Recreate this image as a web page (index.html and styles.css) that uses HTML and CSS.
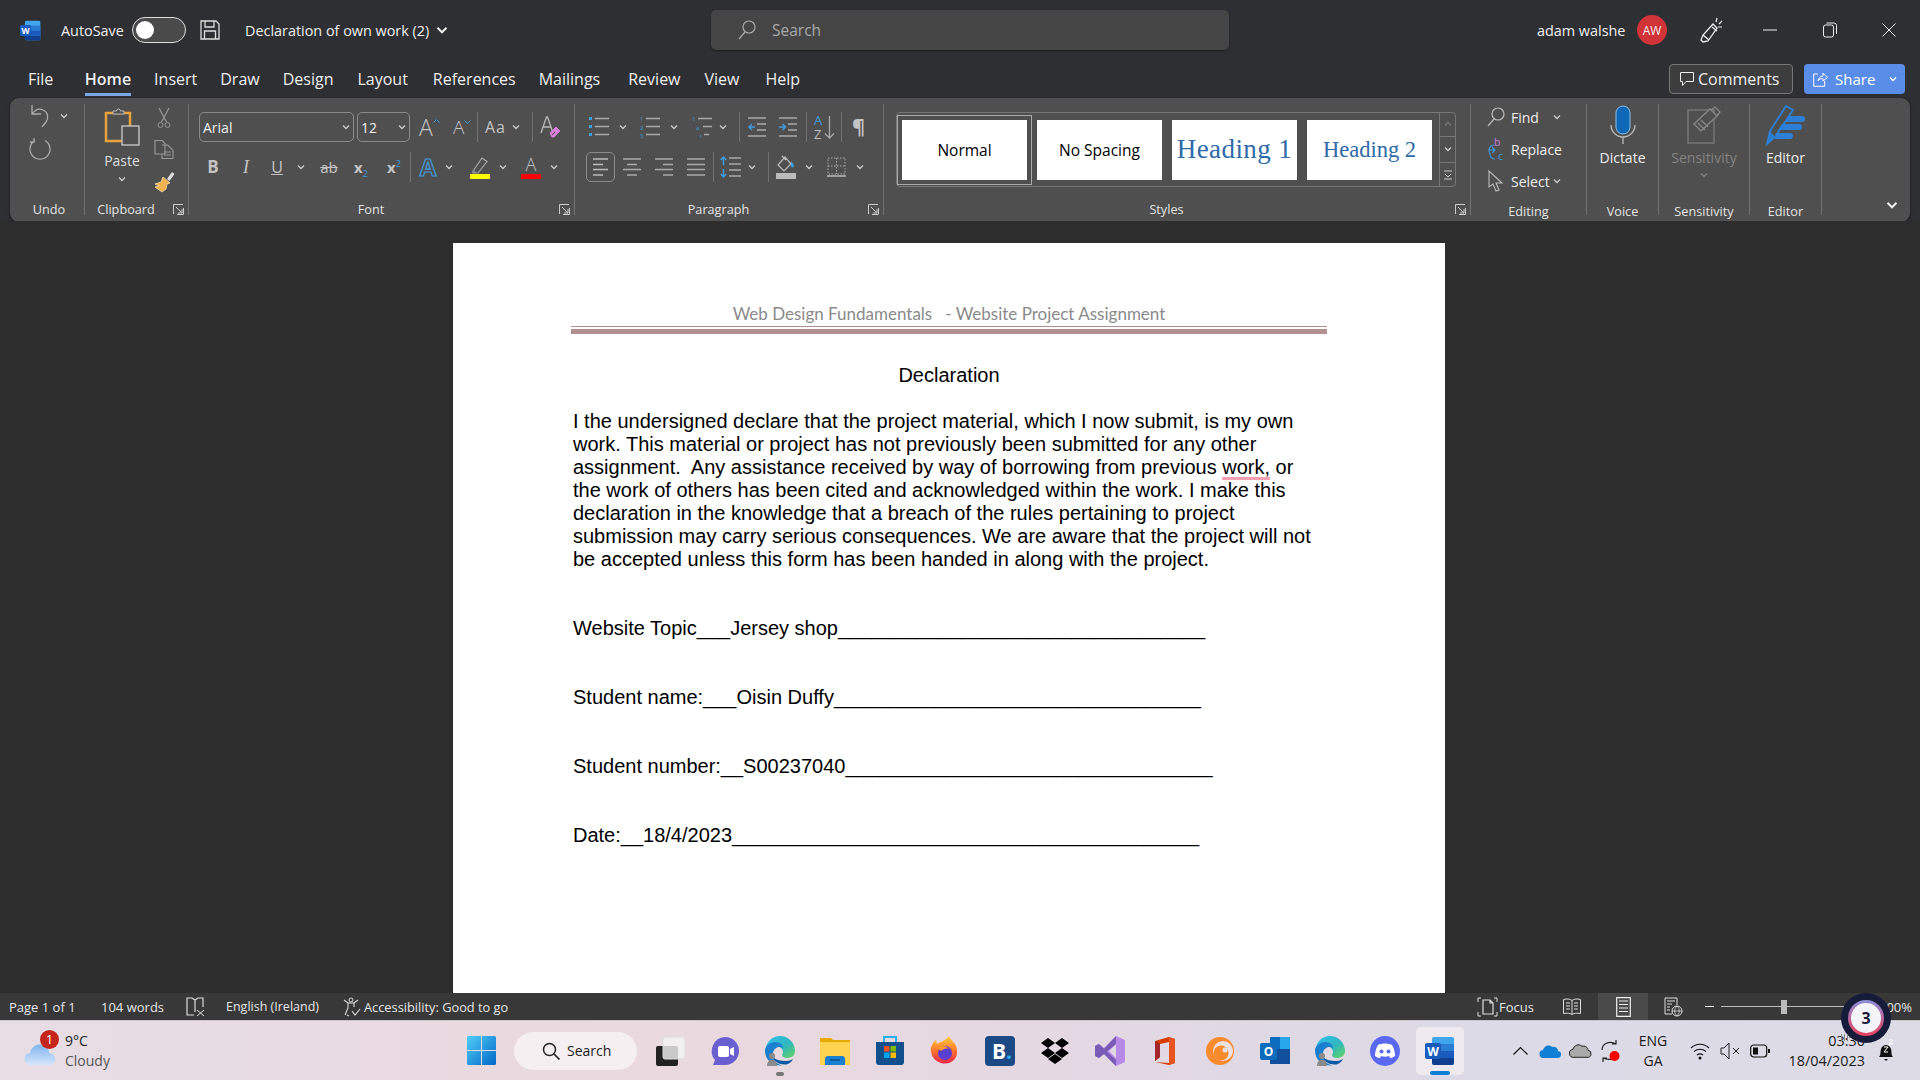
FILE: index.html
```html
<!DOCTYPE html>
<html lang="en">
<head>
<meta charset="UTF-8">
<title>Declaration of own work (2) - Word</title>
<link rel="stylesheet" href="styles.css">
</head>
<body>
<svg class="defs" width="0" height="0">
  <defs>
    <symbol id="chev" viewBox="0 0 8 8"><path d="M1 2.5 4 5.5 7 2.5" fill="none" stroke="currentColor" stroke-width="1.3"/></symbol>
    <symbol id="launch" viewBox="0 0 11 11"><path d="M.5 10V.5H10M3 3l6 6M9 5v4H5M10.5 4v6.5H4" fill="none" stroke="#ccc" stroke-width="1"/></symbol>
    <symbol id="wordlogo" viewBox="0 0 30 30">
      <rect x="7" y="1" width="22" height="28" rx="2" fill="#41a5ee"/>
      <rect x="7" y="8" width="22" height="7" fill="#2b7cd3"/>
      <rect x="7" y="15" width="22" height="7" fill="#185abd"/>
      <path d="M7 22h22v5a2 2 0 0 1-2 2H9a2 2 0 0 1-2-2z" fill="#103f91"/>
      <rect x="0" y="7" width="16" height="16" rx="2" fill="#1a5cbe"/>
      <text x="8" y="19.5" text-anchor="middle" class="logo-w">W</text>
    </symbol>
    <symbol id="edge" viewBox="0 0 30 30">
      <defs>
        <linearGradient id="edgeg" x1="0" y1="0" x2="1" y2="1"><stop offset="0" stop-color="#35c1f1"/><stop offset=".55" stop-color="#2fb6c0"/><stop offset="1" stop-color="#66d75f"/></linearGradient>
      </defs>
      <path d="M15 0a15 15 0 0 1 15 15c0 5-4 7-8 7-3 0-5-1-5-3 0-1 1-1.500 1-3 0-3-3-6-8-6-6 0-10 4-10 8C0 6 7 0 15 0z" fill="url(#edgeg)"/>
      <path d="M0 15c0-5 5-9 10-9 5 0 8 3 8 6-3-2-9-1-10 5-1 6 3 11 9 12.500C8 30 0 24 0 15z" fill="#1b7fd0"/>
      <path d="M8 21c1 5 8 9 15 7 2-1 4-3 5-5-2 1-4 2-7 2-5 0-10-1-13-4z" fill="#0c59a4"/>
      <circle cx="7" cy="20" r="3" fill="#8a8a8a"/><path d="M2 30c0-4 2-6 5-6s5 2 5 6z" fill="#8a8a8a"/>
    </symbol>
  </defs>
</svg>

<header class="titlebar">
  <svg class="word-icon"><use href="#wordlogo"/></svg>
  <span class="autosave">AutoSave</span>
  <span class="toggle"><span class="knob"></span></span>
  <svg class="save" width="20" height="20" viewBox="0 0 20 20"><path d="M1 1h15l3 3v15H1zM5 1v6h9V1M4.500 19v-8h11v8" fill="none" stroke="#ddd" stroke-width="1.300"/></svg>
  <span class="doc-name">Declaration of own work (2)</span>
  <svg class="title-chev"><use href="#chev"/></svg>
  <div class="searchbox">
    <svg width="18" height="20" viewBox="0 0 18 20"><circle cx="11" cy="7" r="6" fill="none" stroke="#aaa" stroke-width="1.200"/><path d="M7 12 1 19" stroke="#aaa" stroke-width="1.200"/></svg>
    <span>Search</span>
  </div>
  <div class="account">
    <span class="user">adam walshe</span>
    <span class="avatar">AW</span>
    <svg class="pen" width="22" height="26" viewBox="0 0 22 26"><path d="M13 7 3 18l-2 5 2 2 5-1 9-13zM3 18l6 5M12 10l5 4" fill="none" stroke="#eee" stroke-width="1.300"/><path d="M16 5l1-4M19 7l3-3M18 10l4 0" fill="none" stroke="#eee" stroke-width="1.200"/></svg>
    <svg class="win-btn" width="14" height="2" viewBox="0 0 14 2"><path d="M0 1h14" stroke="#eee"/></svg>
    <svg class="win-btn restore" width="14" height="16" viewBox="0 0 14 16"><rect x=".5" y="3" width="10" height="12" rx="2" fill="none" stroke="#eee"/><path d="M3.500 1H11a2.500 2.500 0 0 1 2.500 2.500V12" fill="none" stroke="#eee"/></svg>
    <svg class="win-btn close" width="14" height="14" viewBox="0 0 14 14"><path d="M.5.500l13 13M13.500.500l-13 13" stroke="#eee"/></svg>
  </div>
</header>

<nav class="tabs">
  <span class="tab">File</span>
  <span class="tab active">Home</span>
  <span class="tab">Insert</span>
  <span class="tab">Draw</span>
  <span class="tab">Design</span>
  <span class="tab">Layout</span>
  <span class="tab">References</span>
  <span class="tab">Mailings</span>
  <span class="tab">Review</span>
  <span class="tab">View</span>
  <span class="tab">Help</span>
  <span class="btn-comments">
    <svg width="14" height="15" viewBox="0 0 14 15"><path d="M.5.500h13v9H6l-3.500 4v-4h-2z" fill="none" stroke="#eee"/></svg>
    Comments
  </span>
  <span class="btn-share">
    <svg width="15" height="15" viewBox="0 0 15 15"><path d="M5 2H.7v12.300h11V9M5 9c0-3 3-5 5-5V1l4.500 4.500L10 9V6.500C8 6.500 6 7 5 9z" fill="none" stroke="#fff"/></svg>
    Share
    <svg class="share-chev"><use href="#chev"/></svg>
  </span>
</nav>

<section class="ribbon">
  <div class="group g-undo">
    <div class="g-body">
      <div class="row undo-row">
        <svg class="ml21" width="20" height="24" viewBox="0 0 20 24"><path d="M1 1v9h9M1 10c3-4 7-6 11-4 5 2 6 8 3 12l-4 5" fill="none" stroke="#aaa" stroke-width="1.300"/></svg>
        <svg class="chev ml9"><use href="#chev"/></svg>
      </div>
      <div class="row undo-row redo-row">
        <svg class="ml19" width="22" height="24" viewBox="0 0 22 24"><path d="M6 3.500A10 10 0 1 0 16 3.500M5 1v4H1" fill="none" stroke="#aaa" stroke-width="1.300"/></svg>
      </div>
    </div>
    <div class="g-label">Undo</div>
  </div>

  <div class="group g-clip">
    <div class="g-body clip-body">
      <div class="paste">
        <svg width="35" height="38" viewBox="0 0 35 38">
          <path d="M1 5h24v28H1z" fill="none" stroke="#e8a33d" stroke-width="2.500"/>
          <path d="M8 6V3h3.500a2 2 0 0 1 4 0H19v3z" fill="#4f4f4f" stroke="#bbb"/>
          <rect x="17" y="18" width="17" height="19" fill="#4f4f4f" stroke="#ccc" stroke-width="1.300"/>
        </svg>
        <span class="paste-text">Paste</span>
        <svg class="chev"><use href="#chev"/></svg>
      </div>
      <div class="clip-tools">
        <svg width="14" height="20" viewBox="0 0 14 20"><path d="M2 0 9.500 14M12 0 4.500 14" fill="none" stroke="#999" stroke-width="1.200"/><circle cx="3.500" cy="17" r="2.500" fill="none" stroke="#999"/><circle cx="10.500" cy="17" r="2.500" fill="none" stroke="#999"/></svg>
        <svg width="20" height="19" viewBox="0 0 20 19"><path d="M1 .5h7l3 3V14H1zM8 5h5l.5 0 5.500 5v8.500H8V14" fill="none" stroke="#999" stroke-width="1.100"/><path d="M10 12h7M10 15h7" stroke="#999"/></svg>
        <svg width="21" height="21" viewBox="0 0 21 21"><path d="M13 8l5-7 2.500 2-5 7z" fill="#ddd"/><path d="M9 6l7 6-3 1-1 5-4 3-7-5 4-1-4-2 6-2z" fill="#f0b24a" stroke="#f6dca8" stroke-width=".8"/></svg>
      </div>
    </div>
    <div class="g-label has-launch">Clipboard<svg class="launch"><use href="#launch"/></svg></div>
  </div>

  <div class="group g-font">
    <div class="g-body">
      <div class="row">
        <span class="combo combo-font">Arial<svg class="chev"><use href="#chev"/></svg></span>
        <span class="combo combo-size ml3">12<svg class="chev"><use href="#chev"/></svg></span>
        <span class="glyph big w20 ml9">A<svg class="caret" width="7" height="4" viewBox="0 0 7 4"><path d="M.5 3.500 3.500.5l3 3" fill="none" stroke="#3f9bdc"/></svg></span>
        <span class="glyph mid w17 ml14">A<svg class="caret" width="7" height="4" viewBox="0 0 7 4"><path d="M.5.500l3 3 3-3" fill="none" stroke="#3f9bdc"/></svg></span>
        <span class="vsep ml7"></span>
        <span class="glyph aa w21 ml7">Aa</span>
        <svg class="chev ml6"><use href="#chev"/></svg>
        <span class="vsep ml12"></span>
        <svg class="ml7" width="20" height="24" viewBox="0 0 20 24"><path d="M1 18 6.500 2h1L13 18M3 12h8" fill="none" stroke="#bbb" stroke-width="1.300"/><path d="M10 18l6-6 4 4-6 6h-2z" fill="#d47fd6" stroke="#d47fd6"/><path d="M12 20l3-3" stroke="#4f4f4f"/></svg>
      </div>
      <div class="row">
        <span class="glyph bold w16 ml6">B</span>
        <span class="glyph ital w16 ml17">I</span>
        <span class="glyph under w16 ml15">U</span>
        <svg class="chev ml12"><use href="#chev"/></svg>
        <span class="glyph strike w18 ml15">ab</span>
        <span class="glyph script w18 ml14">x<sub>2</sub></span>
        <span class="glyph script w18 ml15">x<sup>2</sup></span>
        <span class="vsep ml7"></span>
        <span class="glyph effect w20 ml7">A</span>
        <svg class="chev ml7"><use href="#chev"/></svg>
        <svg class="ml17" width="20" height="24" viewBox="0 0 20 24"><path d="M3 16l9-13 5 3.500L8 18H3z" fill="none" stroke="#aaa" stroke-width="1.200"/><path d="M3 14v4h4" fill="#888"/><rect y="19" width="20" height="5" fill="#ffff00"/></svg>
        <svg class="chev ml9"><use href="#chev"/></svg>
        <span class="glyph colour w20 ml14">A</span>
        <svg class="chev ml9"><use href="#chev"/></svg>
      </div>
    </div>
    <div class="g-label has-launch">Font<svg class="launch"><use href="#launch"/></svg></div>
  </div>

  <div class="group g-para">
    <div class="g-body">
      <div class="row">
        <svg class="ml3" width="20" height="22" viewBox="0 0 20 22"><path d="M0 1h3v3H0zM0 9h3v3H0zM0 17h3v3H0z" fill="#3f9bdc"/><path d="M6 2.500h14M6 10.500h14M6 18.500h14" stroke="#aaa" stroke-width="1.500"/></svg>
        <svg class="chev ml10"><use href="#chev"/></svg>
        <svg class="ml13" width="20" height="22" viewBox="0 0 20 22"><text x="0" y="5" class="mini">1</text><text x="0" y="13.500" class="mini">2</text><text x="0" y="22" class="mini">3</text><path d="M6 2.500h14M6 10.500h14M6 18.500h14" stroke="#aaa" stroke-width="1.500"/></svg>
        <svg class="chev ml10"><use href="#chev"/></svg>
        <svg class="ml14" width="20" height="22" viewBox="0 0 20 22"><text x="0" y="5" class="mini">1</text><text x="4" y="13.500" class="mini">a</text><text x="8" y="22" class="mini">i</text><path d="M6 2.500h14M11 10.500h9M12 18.500h5" stroke="#aaa" stroke-width="1.500"/></svg>
        <svg class="chev ml7"><use href="#chev"/></svg>
        <span class="vsep ml12"></span>
        <svg class="ml8" width="18" height="22" viewBox="0 0 18 22"><path d="M0 2h18M9 8h9M9 14h9M0 20h18" stroke="#aaa" stroke-width="1.500"/><path d="M7 11H1M4 8l-3 3 3 3" fill="none" stroke="#3f9bdc" stroke-width="1.500"/></svg>
        <svg class="ml13" width="18" height="22" viewBox="0 0 18 22"><path d="M0 2h18M9 8h9M9 14h9M0 20h18" stroke="#aaa" stroke-width="1.500"/><path d="M0 11h6M3.500 8l3 3-3 3" fill="none" stroke="#3f9bdc" stroke-width="1.500"/></svg>
        <span class="vsep ml9"></span>
        <svg class="ml7" width="21" height="26" viewBox="0 0 21 26"><text x="0" y="11" class="az az-a">A</text><text x="0" y="25" class="az">Z</text><path d="M15.500 2v22M11 19.500l4.500 4.500 4.500-4.500" fill="none" stroke="#aaa" stroke-width="1.300"/></svg>
        <span class="vsep ml6"></span>
        <span class="glyph pil w15 ml9">¶</span>
      </div>
      <div class="row">
        <span class="align-on"><svg width="19" height="20" viewBox="0 0 19 20"><path d="M2 2h15M2 7.500h10M2 12.500h15M2 18h10" stroke="#bbb" stroke-width="1.500"/></svg></span>
        <svg class="ml8" width="18" height="20" viewBox="0 0 18 20"><path d="M0 2h18M4 7.500h10M0 12.500h18M4 18h10" stroke="#aaa" stroke-width="1.500"/></svg>
        <svg class="ml14" width="18" height="20" viewBox="0 0 18 20"><path d="M0 2h18M8 7.500h10M0 12.500h18M8 18h10" stroke="#aaa" stroke-width="1.500"/></svg>
        <svg class="ml14" width="18" height="20" viewBox="0 0 18 20"><path d="M0 2h18M0 7.500h18M0 12.500h18M0 18h18" stroke="#aaa" stroke-width="1.500"/></svg>
        <span class="vsep ml8"></span>
        <svg class="ml6" width="21" height="22" viewBox="0 0 21 22"><path d="M9 2h12M9 8h12M9 14h12M9 20h12" stroke="#aaa" stroke-width="1.500"/><path d="M3.500 9V1M3.500 13v8M.7 4 3.500 1l2.800 3M.7 18l2.800 3 2.800-3" fill="none" stroke="#3f9bdc" stroke-width="1.500"/></svg>
        <svg class="chev ml7"><use href="#chev"/></svg>
        <span class="vsep ml12"></span>
        <svg class="ml7" width="20" height="24" viewBox="0 0 20 24"><path d="M9 2 2 10l6 6 7-7zM6 1l4 4" fill="none" stroke="#bbb" stroke-width="1.200"/><path d="M15 6c2 2 3 4 3 5a1.500 1.500 0 0 1-3 0z" fill="#3f9bdc"/><rect y="18" width="20" height="6" fill="#bbb"/></svg>
        <svg class="chev ml9"><use href="#chev"/></svg>
        <svg class="ml14" width="19" height="20" viewBox="0 0 19 20"><path d="M1 1h17v16H1zM9.500 1v16M1 9h17" fill="none" stroke="#aaa" stroke-dasharray="1.500 1.500"/><path d="M0 19h19" stroke="#bbb" stroke-width="1.500"/></svg>
        <svg class="chev ml10"><use href="#chev"/></svg>
      </div>
    </div>
    <div class="g-label has-launch">Paragraph<svg class="launch"><use href="#launch"/></svg></div>
  </div>

  <div class="group g-styles">
    <div class="g-body">
      <div class="gallery">
        <span class="tile tile-on">Normal</span>
        <span class="tile">No Spacing</span>
        <span class="tile h1">Heading 1</span>
        <span class="tile h2">Heading 2</span>
        <div class="gal-scroll">
          <span class="dim"><svg class="chev flip"><use href="#chev"/></svg></span>
          <span><svg class="chev"><use href="#chev"/></svg></span>
          <span><svg width="10" height="10" viewBox="0 0 10 10"><path d="M1 1h8M2 4l3 3 3-3M1 9h8" fill="none" stroke="#ccc"/></svg></span>
        </div>
      </div>
    </div>
    <div class="g-label has-launch">Styles<svg class="launch"><use href="#launch"/></svg></div>
  </div>

  <div class="group g-edit">
    <div class="g-body edit-body">
      <div class="edit-row">
        <svg width="18" height="20" viewBox="0 0 18 20"><circle cx="11" cy="7" r="6" fill="none" stroke="#bbb" stroke-width="1.200"/><path d="M7 12 1 19" stroke="#bbb" stroke-width="1.200"/></svg>
        <span>Find</span><svg class="chev find-chev"><use href="#chev"/></svg>
      </div>
      <div class="edit-row">
        <svg width="18" height="22" viewBox="0 0 18 22"><text x="7" y="8" class="rep rep-b">b</text><text x="11" y="22" class="rep">c</text><path d="M7 7C2 7 1 13 3 16M1 12h7M5 9l3 3-3 3M8 21c-3 0-5-2-5-5" fill="none" stroke="#3f9bdc" stroke-width="1.100"/></svg>
        <span>Replace</span>
      </div>
      <div class="edit-row">
        <svg width="18" height="22" viewBox="0 0 18 22"><path d="M2 1v16l4-3 3 7 3-1-3-7h6z" fill="none" stroke="#bbb" stroke-width="1.100"/></svg>
        <span>Select</span><svg class="chev select-chev"><use href="#chev"/></svg>
      </div>
    </div>
    <div class="g-label low">Editing</div>
  </div>

  <div class="group g-voice">
    <div class="g-body big-body">
      <svg width="26" height="38" viewBox="0 0 26 38"><rect x="6" y="0" width="14" height="28" rx="7" fill="#0f67b8" stroke="#8dc1ea"/><path d="M1 19a12 12 0 0 0 24 0M13 31v7" fill="none" stroke="#bbb" stroke-width="1.300"/></svg>
      <span>Dictate</span>
    </div>
    <div class="g-label low">Voice</div>
  </div>

  <div class="group g-sens">
    <div class="g-body big-body muted">
      <svg width="34" height="38" viewBox="0 0 34 38"><path d="M1 4h26v33H1z" fill="none" stroke="#777" stroke-width="1.500"/><path d="M7 18 23 3l7 7-16 15z" fill="#4f4f4f" stroke="#888" stroke-width="1.300"/><path d="M24 4l4-3 5 5-3 4M11 17l7 7M14 14l7 7" fill="none" stroke="#888" stroke-width="1.300"/></svg>
      <span>Sensitivity</span>
      <svg class="chev"><use href="#chev"/></svg>
    </div>
    <div class="g-label low">Sensitivity</div>
  </div>

  <div class="group g-editor">
    <div class="g-body big-body">
      <svg width="38" height="38" viewBox="0 0 38 38"><path d="M0 38 3 25 19 0l7 4L8 31z" fill="none" stroke="#2c7fd6" stroke-width="1.800"/><path d="M0 38l8-7-5-6zM22 10h13a3 3 0 0 1 0 6H18zM15 18h17a3 3 0 0 1 0 6H11zM9 27h14a3 3 0 0 1 0 6H8z" fill="#2c7fd6"/></svg>
      <span>Editor</span>
    </div>
    <div class="g-label low">Editor</div>
  </div>

  <div class="ribbon-end"><svg class="collapse"><use href="#chev"/></svg></div>
</section>

<main class="workspace">
  <article class="page">
    <div class="doc-head">Web Design Fundamentals   - Website Project Assignment</div>
    <div class="doc-rule"></div>
    <h1 class="doc-title">Declaration</h1>
    <p class="doc-text">I the undersigned declare that the project material, which I now submit, is my own<br>
    work. This material or project has not previously been submitted for any other<br>
    assignment.&nbsp; Any assistance received by way of borrowing from previous <span class="spell">work,</span> or<br>
    the work of others has been cited and acknowledged within the work. I make this<br>
    declaration in the knowledge that a breach of the rules pertaining to project<br>
    submission may carry serious consequences. We are aware that the project will not<br>
    be accepted unless this form has been handed in along with the project.</p>
    <p class="doc-field">Website Topic___Jersey shop_________________________________</p>
    <p class="doc-field">Student name:___Oisin Duffy_________________________________</p>
    <p class="doc-field">Student number:__S00237040_________________________________</p>
    <p class="doc-field">Date:__18/4/2023__________________________________________</p>
  </article>
</main>

<footer class="status">
  <span class="st-page">Page 1 of 1</span>
  <span class="st-words">104 words</span>
  <svg class="st-proof" width="19" height="20" viewBox="0 0 19 20"><path d="M8 18H1V1h5l3 2 3-2h5v9M9 3v12" fill="none" stroke="#ddd" stroke-width="1.200"/><path d="M11 13l7 6M18 13l-7 6" stroke="#ddd"/></svg>
  <span class="st-lang">English (Ireland)</span>
  <svg class="st-acc" width="18" height="20" viewBox="0 0 18 20"><circle cx="8" cy="3" r="2" fill="none" stroke="#ddd"/><path d="M1 3l4 3h6l4-3M5 6v5l-3 7M11 6v4M4 18l2 1M9 14l3 4 5-6" fill="none" stroke="#ddd" stroke-width="1.100"/></svg>
  <span class="st-a11y">Accessibility: Good to go</span>
  <div class="st-right">
    <svg width="19" height="20" viewBox="0 0 19 20"><path d="M5 3h7l3 3v11H5zM12 3v3h3" fill="none" stroke="#ddd" stroke-width="1.200"/><path d="M0 5V1h3M19 5V1h-3M0 15v4h3M19 15v4h-3" fill="none" stroke="#ddd"/></svg>
    <span class="st-focus">Focus</span>
    <svg class="st-read" width="18" height="18" viewBox="0 0 18 18"><path d="M.5 1.500C4 .5 7 1 9 2.500 11 1 14 .5 17.500 1.500v14C14 15 11 15 9 16.500 7 15 4 15 .5 15.500zM9 2.500v14M3 5h4M3 8h4M3 11h4M11 5h4M11 8h4M11 11h4" fill="none" stroke="#ddd"/></svg>
    <span class="st-layout"><svg width="15" height="20" viewBox="0 0 15 20"><path d="M.7.700h13.600v18.600H.7zM3 4h9M3 7.500h9M3 11h9M3 14.500h9" fill="none" stroke="#eee" stroke-width="1.200"/></svg></span>
    <svg class="st-web" width="18" height="20" viewBox="0 0 18 20"><path d="M8 17H1V1h12v7M3 4h8M3 7h5M3 10h3M3 13h3" fill="none" stroke="#ddd"/><circle cx="13" cy="14" r="5" fill="none" stroke="#ddd"/><path d="M8 14h10M13 9c-3 3-3 7 0 10M13 9c3 3 3 7 0 10" fill="none" stroke="#ddd" stroke-width=".8"/></svg>
    <span class="zoom-minus"></span>
    <span class="zoom-track"><span class="zoom-thumb"></span></span>
    <span class="st-zoom">100%</span>
  </div>
</footer>

<div class="taskbar">
  <div class="weather">
    <svg class="cloud" width="30" height="22" viewBox="0 0 30 22"><defs><linearGradient id="cl" x1="0" y1="0" x2="0" y2="1"><stop offset="0" stop-color="#7fb4f0"/><stop offset="1" stop-color="#d5e6fb"/></linearGradient></defs><path d="M6 22a6 6 0 0 1-1-12c1-6 7-10 13-8 4 1 6 4 6 8a6 6 0 0 1 0 12z" fill="url(#cl)"/></svg>
    <span class="badge-one">1</span>
    <div class="weather-text"><span>9°C</span><span class="w-sub">Cloudy</span></div>
  </div>
  <svg class="win-logo" width="29" height="29" viewBox="0 0 29 29"><defs><linearGradient id="win" x1="0" y1="0" x2="1" y2="1"><stop offset="0" stop-color="#4fcdf8"/><stop offset="1" stop-color="#0369c8"/></linearGradient></defs><path d="M0 1.500A1.500 1.500 0 0 1 1.500 0H14v14H0zM15 0h12.500A1.500 1.500 0 0 1 29 1.500V14H15zM0 15h14v14H1.500A1.500 1.500 0 0 1 0 27.500zM15 15h14v12.500a1.500 1.500 0 0 1-1.500 1.500H15z" fill="url(#win)"/></svg>
  <div class="task-search">
    <svg width="18" height="18" viewBox="0 0 18 18"><circle cx="7.500" cy="7.500" r="6" fill="none" stroke="#222" stroke-width="1.500"/><path d="M12 12l5.500 5.500" stroke="#222" stroke-width="1.700"/></svg>
    <span>Search</span>
  </div>
  <div class="apps">
    <span class="app"><svg width="30" height="30" viewBox="0 0 30 30"><rect x="1" y="10" width="22" height="20" rx="2" fill="#222"/><rect x="8" y="1" width="22" height="22" rx="2" fill="#f4f4f4" fill-opacity=".8" stroke="#ddd"/></svg></span>
    <span class="app"><svg width="30" height="30" viewBox="0 0 30 30"><path d="M15 1a14 14 0 0 1 0 28H3l2-5A14 14 0 0 1 15 1z" fill="#6a5fd0"/><rect x="8" y="10" width="11" height="11" rx="2" fill="#fff"/><path d="M20 13l4-2v9l-4-2z" fill="#fff"/></svg></span>
    <span class="app app-run"><svg width="30" height="30"><use href="#edge"/></svg></span>
    <span class="app"><svg width="30" height="30" viewBox="0 0 30 30"><path d="M0 2h11l2 2h17v25H0z" fill="#e8a900"/><rect y="6" width="30" height="23" fill="#ffd34f"/><path d="M5 29v-6a3 3 0 0 1 3-3h14a3 3 0 0 1 3 3v6z" fill="#1a7fd0"/><path d="M10 24h10" stroke="#0b4f8c" stroke-width="1.500"/></svg></span>
    <span class="app"><svg width="30" height="30" viewBox="0 0 30 30"><path d="M9 6V1h12v5" fill="none" stroke="#2bb0ef" stroke-width="2"/><path d="M1 6h28v20a3 3 0 0 1-3 3H4a3 3 0 0 1-3-3z" fill="#11508c"/><rect x="9" y="10" width="5.500" height="5.500" fill="#f25022"/><rect x="15.500" y="10" width="5.500" height="5.500" fill="#7fba00"/><rect x="9" y="16.500" width="5.500" height="5.500" fill="#00a4ef"/><rect x="15.500" y="16.500" width="5.500" height="5.500" fill="#ffb900"/></svg></span>
    <span class="app"><svg width="30" height="30" viewBox="0 0 30 30"><defs><linearGradient id="ff" x1="0" y1="0" x2="0" y2="1"><stop offset="0" stop-color="#ffd33d"/><stop offset=".5" stop-color="#ff7a2b"/><stop offset="1" stop-color="#e8274b"/></linearGradient></defs><path d="M19 0c1 3 4 5 6 8 3 5 3 12-1 16a14 14 0 0 1-23-8C0 11 3 6 6 4l1 4c3-2 8-3 12-8z" fill="url(#ff)"/><circle cx="15" cy="17" r="7" fill="#5b3fd0"/><path d="M8 12c4-3 9-2 11 1-3-1-6 0-8 2z" fill="#ff9a2b"/></svg></span>
    <span class="app"><span class="b-tile">B<i>.</i></span></span>
    <span class="app"><svg width="30" height="30" viewBox="0 0 30 30"><path d="M8 2 1 7l7 5 7-5zM22 2l-7 5 7 5 7-5zM8 12l-7 5 7 5 7-5zM22 12l-7 5 7 5 7-5zM15 18l-7 5 7 5 7-5z" fill="#000"/></svg></span>
    <span class="app"><svg width="30" height="30" viewBox="0 0 30 30"><path d="M21 0l9 4v22l-9 4-12-12-5 4-4-2V10l4-2 5 4zM21 8l-7 7 7 7z" fill="#b88ae8"/><path d="M0 10l4-2 17 16-0 6-12-12-5 4-4-2zM21 0v8L4 22V18z" fill="#7a5bb8"/></svg></span>
    <span class="app"><svg width="30" height="30" viewBox="0 0 30 30"><path d="M5 5 19 1l6 2v24l-6 2-14-3 14 1V6L10 8v13l-5 4z" fill="#d83b01"/><path d="M19 1l6 2v24l-6 2z" fill="#e9531f"/><path d="M5 5l5 3v13l-5 4z" fill="#a4262c"/></svg></span>
    <span class="app"><svg width="30" height="30" viewBox="0 0 30 30"><circle cx="15" cy="15" r="14" fill="#f78b2d"/><circle cx="18" cy="15" r="10" fill="#ede0e0"/><circle cx="16" cy="17" r="7.500" fill="#f78b2d"/><circle cx="20" cy="14" r="2.500" fill="#ede0e0"/></svg></span>
    <span class="app"><svg width="30" height="30" viewBox="0 0 30 30"><rect x="10" y="1" width="20" height="24" rx="1" fill="#0a6cc0"/><rect x="20" y="1" width="10" height="12" fill="#28a8ea"/><path d="M10 13h20v15H10z" fill="#0f4f9c"/><rect y="7" width="17" height="17" rx="2" fill="#0f6cbd"/><text x="8.500" y="20" text-anchor="middle" class="logo-o">O</text></svg></span>
    <span class="app"><svg width="30" height="30"><use href="#edge"/></svg></span>
    <span class="app"><svg width="30" height="30" viewBox="0 0 30 30"><circle cx="15" cy="15" r="15" fill="#5b69f0"/><path d="M8 9c4-2 10-2 14 0 2 3 3 7 3 11-2 1-3 2-5 2l-1-2c-3 1-5 1-8 0l-1 2c-2 0-3-1-5-2 0-4 1-8 3-11z" fill="#fff"/><circle cx="11.500" cy="15.500" r="2" fill="#5b69f0"/><circle cx="18.500" cy="15.500" r="2" fill="#5b69f0"/></svg></span>
    <span class="app app-word"><svg width="30" height="30"><use href="#wordlogo"/></svg></span>
  </div>
  <div class="tray">
    <svg class="t-caret" width="15" height="9" viewBox="0 0 15 9"><path d="M.5 8.500l7-7 7 7" fill="none" stroke="#111" stroke-width="1.200"/></svg>
    <svg class="t10" width="20" height="14" viewBox="0 0 20 14"><path d="M4 14a4 4 0 0 1-1-8c1-4 6-6 9-3 3-1 6 1 6 4a3.500 3.500 0 0 1-1 7z" fill="#0f7fd6"/></svg>
    <svg class="t10" width="20" height="15" viewBox="0 0 20 15"><path d="M4 14.300a4 4 0 0 1-1-8c1-4 6-6 9-3 3-1 6 1 6 4a3.500 3.500 0 0 1-1 7z" fill="#aaa" stroke="#222"/></svg>
    <svg class="t10" width="20" height="22" viewBox="0 0 20 22"><path d="M2 10C2 4 9 0 16 4M16 0v4h-4M18 13c-2 6-9 8-15 5M3 22v-4h4" fill="none" stroke="#222" stroke-width="1.200"/><circle cx="14.500" cy="16" r="5" fill="#f00"/></svg>
    <div class="t-lang"><span>ENG</span><span>GA</span></div>
    <svg class="t-wifi" width="20" height="18" viewBox="0 0 20 18"><path d="M1 6c5-5 13-5 18 0M4 9.500c3.500-3 8.500-3 12 0M7 13c2-1.500 4-1.500 6 0" fill="none" stroke="#111" stroke-width="1.200"/><circle cx="10" cy="16" r="1.500" fill="#111"/></svg>
    <svg class="t10" width="20" height="18" viewBox="0 0 20 18"><path d="M1 6h3l5-5v16l-5-5H1zM13 6l6 6M19 6l-6 6" fill="none" stroke="#222"/></svg>
    <svg class="t10" width="20" height="14" viewBox="0 0 20 14"><rect x=".7" y="1" width="16" height="12" rx="3" fill="none" stroke="#111" stroke-width="1.200"/><rect x="3" y="3.500" width="5" height="7" fill="#111"/><path d="M19 5v4" stroke="#111" stroke-width="2"/></svg>
    <div class="t-clock"><span>03:30</span><span>18/04/2023</span></div>
    <svg class="t-bell" width="16" height="24" viewBox="0 0 16 24"><path d="M1 18c2-2 1-4 2-8 1-3 3-4 5-4s4 1 5 4c1 4 0 6 2 8z" fill="#111"/><path d="M6 20h4l-2 2z" fill="#111"/><path d="M6 8h4l-4 5h4M11 1h4l-4 4h4" fill="none" stroke="#fff"/></svg>
  </div>
</div>

<div class="bubble">
  <span class="bubble-ring"><span class="bubble-core">3</span></span>
  <span class="bubble-dots"></span>
</div>
</body>
</html>
```

FILE: styles.css
```css
* { box-sizing: border-box; }

html, body {
  margin: 0;
  height: 100%;
}

body {
  width: 1920px;
  height: 1080px;
  overflow: hidden;
  display: flex;
  flex-direction: column;
  position: relative;
  background: #2e2f33;
  color: #eee;
  font-family: "Open Sans", "Noto Sans", sans-serif;
  font-size: 14px;
}

svg { display: block; flex: none; overflow: visible; }
.defs { position: absolute; }

.logo-w { font: 700 12px "Open Sans", sans-serif; fill: #fff; }
.logo-o { font: 700 12px "Open Sans", sans-serif; fill: #fff; }

/* title bar */
.titlebar {
  height: 60px;
  display: flex;
  align-items: center;
  padding-left: 20px;
  flex: none;
  font-size: 14.400px;
}
.word-icon { width: 21px; height: 21px; }
.autosave { margin-left: 20px; width: 66px; white-space: nowrap; }
.toggle {
  margin-left: 5px;
  width: 54px;
  height: 26px;
  border: 1px solid #ddd;
  border-radius: 13px;
  background: #4a4a4a;
  padding: 3px;
}
.knob { display: block; width: 18px; height: 18px; border-radius: 50%; background: #fff; }
.save { margin-left: 14px; }
.doc-name { margin-left: 25px; width: 191px; white-space: nowrap; }
.title-chev { width: 12px; height: 12px; color: #eee; }
.searchbox {
  position: absolute;
  left: 711px;
  top: 10px;
  width: 518px;
  height: 40px;
  background: #454545;
  border-radius: 5px;
  display: flex;
  align-items: center;
  padding-left: 27px;
  gap: 16px;
  color: #a8a8a8;
  font-size: 15.500px;
  box-shadow: 0 1px 2px #1c1c1c;
}
.account {
  margin-left: auto;
  display: flex;
  align-items: center;
}
.user { width: 88px; white-space: nowrap; margin-right: 12px; }
.avatar {
  width: 30px;
  height: 30px;
  border-radius: 50%;
  background: #d13438;
  font-size: 12px;
  display: flex;
  align-items: center;
  justify-content: center;
}
.pen { margin-left: 33px; }
.win-btn { margin-left: 41px; }
.win-btn.restore { margin-left: 46px; }
.win-btn.close { margin-left: 45px; margin-right: 24px; }

/* tabs */
.tabs {
  height: 38px;
  flex: none;
  display: flex;
  align-items: center;
  padding-left: 28px;
  position: relative;
  font-size: 16px;
}
.tab { margin-right: 23px; white-space: nowrap; line-height: 34px; position: relative; }
.tab:nth-child(1) { margin-right: 31.500px; }
.tab:nth-child(5) { margin-right: 24px; }
.tab:nth-child(6) { margin-right: 25px; }
.tab:nth-child(8) { margin-right: 28px; }
.tab:nth-child(9) { margin-right: 24px; }
.tab:nth-child(10) { margin-right: 26px; }
.tab.active { font-weight: 600; }
.tab.active::after {
  content: "";
  position: absolute;
  left: 0;
  right: 0;
  bottom: 0;
  height: 3px;
  background: #7ba6ea;
}
.btn-comments, .btn-share {
  height: 30px;
  display: flex;
  align-items: center;
  border-radius: 4px;
  white-space: nowrap;
}
.btn-comments {
  margin-left: auto;
  width: 124px;
  padding-left: 10px;
  gap: 4px;
  border: 1px solid #777;
  background: #3d3d3d;
}
.btn-share {
  margin-left: 11px;
  margin-right: 15px;
  width: 101px;
  padding-left: 9px;
  gap: 7px;
  background: #5a8de8;
  color: #fff;
  font-size: 15px;
}
.share-chev { width: 8px; height: 8px; margin-left: 7px; color: #fff; }

/* ribbon */
.ribbon {
  margin: 0 10px;
  height: 124px;
  flex: none;
  background: #4f4f4f;
  border-radius: 9px;
  padding: 6px 0 7px;
  display: flex;
  color: #ddd;
  box-shadow: 0 1px 3px #1a1a1a;
}
.group {
  display: flex;
  flex-direction: column;
  border-right: 1px solid #727272;
  position: relative;
  flex: none;
}
.g-undo { width: 75px; }
.g-clip { width: 104px; }
.g-font { width: 386px; }
.g-para { width: 309px; }
.g-styles { width: 587px; }
.g-edit { width: 116px; }
.g-voice { width: 72px; }
.g-sens { width: 91px; }
.g-editor { width: 72px; }
.ribbon-end { flex: 1; display: flex; align-items: flex-end; justify-content: flex-end; padding: 0 12px 4px 0; }
.collapse { width: 12px; height: 12px; color: #eee; }

.g-body { flex: 1; padding-top: 8px; display: flex; flex-direction: column; gap: 10px; }
.g-label {
  flex: none;
  height: 14px;
  line-height: 14px;
  margin-bottom: -1px;
  text-align: center;
  font-size: 12.700px;
  color: #e4e4e4;
  white-space: nowrap;
}
.g-label.low { margin-bottom: -2px; transform: translateY(1px); }
.g-undo .g-label { padding-left: 4px; }
.has-launch { padding-right: 21px; position: relative; }
.launch { position: absolute; right: 4px; top: 2px; width: 11px; height: 11px; }

.row { display: flex; align-items: center; height: 30px; }
.chev { width: 8px; height: 8px; color: #ccc; }
.flip { transform: rotate(180deg); }
.vsep { width: 1px; height: 30px; background: #727272; flex: none; }

.ml3 { margin-left: 3px; }
.ml6 { margin-left: 6px; }
.ml7 { margin-left: 7px; }
.ml8 { margin-left: 8px; }
.ml9 { margin-left: 9px; }
.ml10 { margin-left: 10px; }
.ml12 { margin-left: 12px; }
.ml13 { margin-left: 13px; }
.ml14 { margin-left: 14px; }
.ml15 { margin-left: 15px; }
.ml17 { margin-left: 17px; }
.ml19 { margin-left: 19px; }
.ml21 { margin-left: 21px; }

.w15 { width: 15px; }
.w16 { width: 16px; }
.w17 { width: 17px; }
.w18 { width: 18px; }
.w20 { width: 20px; }
.w21 { width: 21px; }

.g-undo .g-body { gap: 0; padding-top: 0; }
.undo-row { height: 24px; }
.redo-row { margin-top: 9px; }

/* clipboard */
.clip-body { flex-direction: row; gap: 0; padding-top: 4px; }
.paste {
  margin-left: 20px;
  width: 34px;
  display: flex;
  flex-direction: column;
  align-items: center;
}
.paste-text { font-size: 14px; line-height: 18px; margin-top: 6px; }
.paste .chev { margin-top: 5px; }
.clip-tools {
  margin-left: 15px;
  width: 20px;
  display: flex;
  flex-direction: column;
  align-items: center;
  gap: 12px;
}

/* font */
.g-font .g-body { padding-left: 10px; }
.combo {
  height: 30px;
  border: 1px solid #8a8a8a;
  border-radius: 5px;
  display: flex;
  align-items: center;
  justify-content: space-between;
  padding: 0 3px;
  font-size: 14px;
  color: #eee;
  flex: none;
}
.combo-font { width: 155px; }
.combo-size { width: 53px; }

.glyph {
  display: block;
  flex: none;
  text-align: center;
  color: #c4c4c4;
  line-height: 22px;
  position: relative;
  white-space: nowrap;
}
.big { font-size: 23px; font-weight: 300; text-align: left; line-height: 26px; }
.mid { font-size: 19px; font-weight: 300; text-align: left; line-height: 24px; }
.caret { position: absolute; right: -1px; top: 5px; }
.aa { font-size: 16px; letter-spacing: 1px; text-align: left; }
.bold { font-weight: 700; font-size: 17px; }
.ital { font-family: "Liberation Serif", serif; font-style: italic; font-size: 18px; }
.under { text-decoration: underline; font-size: 16px; }
.strike { text-decoration: line-through; font-size: 15px; }
.script { font-weight: 700; font-size: 15px; }
.script sub, .script sup { font-size: 9px; color: #3f9bdc; font-weight: 400; line-height: 0; }
.effect {
  font-size: 24px;
  font-weight: 700;
  color: #4f4f4f;
  line-height: 26px;
  -webkit-text-stroke: 1.200px #3f9bdc;
}
.colour {
  font-size: 18px;
  font-weight: 300;
  border-bottom: 5px solid #ff0000;
  line-height: 19px;
}
.pil { font-size: 20px; font-weight: 700; }
.mini { font: 6px "Open Sans", sans-serif; fill: #3f9bdc; }
.az { font: 13px "Open Sans", sans-serif; fill: #bbb; }
.az-a { fill: #3f9bdc; }

/* paragraph */
.g-para .g-body { padding-left: 11px; }
.align-on {
  width: 29px;
  height: 30px;
  flex: none;
  border: 1px solid #8a8a8a;
  border-radius: 5px;
  display: flex;
  align-items: center;
  justify-content: center;
}

/* styles gallery */
.gallery {
  margin-left: 12px;
  width: 560px;
  height: 75px;
  border: 1px solid #777;
  border-radius: 4px;
  display: flex;
  align-items: center;
  padding-left: 5px;
  gap: 10px;
}
.tile {
  width: 125px;
  height: 60px;
  flex: none;
  background: #fff;
  color: #000;
  display: flex;
  align-items: center;
  justify-content: center;
  font-size: 15.500px;
  white-space: nowrap;
}
.tile-on { outline: 1px solid #aaa; outline-offset: 4px; }
.h1, .h2 { font-family: "Liberation Serif", serif; color: #2e6aa8; }
.h1 { font-size: 27px; letter-spacing: .4px; }
.h2 { font-size: 22.500px; }
.gal-scroll {
  margin-left: -3px;
  width: 17px;
  height: 75px;
  flex: none;
  border-left: 1px solid #777;
  display: flex;
  flex-direction: column;
}
.gal-scroll span {
  flex: 1;
  display: flex;
  align-items: center;
  justify-content: center;
  border-bottom: 1px solid #777;
}
.gal-scroll span:last-child { border-bottom: 0; }
.gal-scroll .dim .chev { color: #777; }

/* editing */
.edit-body { padding: 0 0 0 16px; gap: 6px; }
.edit-row { height: 26px; display: flex; align-items: center; gap: 6px; font-size: 14px; color: #eee; }
.find-chev { margin-left: 8px; }
.select-chev { margin-left: -3px; }
.rep { font: 10.500px "Open Sans", sans-serif; fill: #3f9bdc; }
.rep-b { fill: #c77fd6; }

/* big buttons */
.big-body {
  padding-top: 2px;
  gap: 0;
  align-items: center;
  color: #eee;
  font-size: 14px;
}
.big-body span { margin-top: 4px; line-height: 20px; white-space: nowrap; }
.muted { color: #828282; }
.muted .chev { color: #828282; margin-top: 3px; }

/* document */
.workspace {
  flex: 1;
  min-height: 0;
  background: #2d2d2d;
  margin-top: -1px;
  overflow: hidden;
  display: flex;
  justify-content: center;
  padding: 22px 22px 0 0;
}
.page {
  width: 992px;
  background: #fff;
  color: #000;
  font-family: "Liberation Sans", Arial, sans-serif;
  padding: 61px 0 0 118px;
}
.doc-head {
  width: 756px;
  text-align: center;
  font-family: Lato, "Open Sans", sans-serif;
  font-size: 17px;
  line-height: 20px;
  color: #8a8a8a;
  white-space: pre;
}
.doc-rule {
  width: 756px;
  height: 8px;
  margin-top: 2px;
  border-top: 1px solid #b09090;
  border-bottom: 5px solid #b09090;
}
.doc-title {
  width: 756px;
  margin: 30px 0 0;
  text-align: center;
  font-size: 20px;
  font-weight: 400;
  line-height: 23px;
}
.doc-text, .doc-field {
  margin: 0 0 0 2px;
  font-size: 20px;
  line-height: 23px;
  white-space: nowrap;
}
.doc-text { margin-top: 23px; }
.doc-field { margin-top: 46px; }
.spell {
  text-decoration: underline;
  text-decoration-color: #f4a0b0;
  text-decoration-thickness: 3px;
  text-underline-offset: 3px;
}

/* status bar */
.status {
  height: 27px;
  flex: none;
  background: #383838;
  display: flex;
  align-items: center;
  font-size: 13px;
  color: #e6e6e6;
  padding-left: 9px;
  white-space: nowrap;
}
.st-page { width: 92px; }
.st-words { width: 85px; }
.st-proof { margin-right: 21px; }
.st-lang { width: 117px; font-size: 12.500px; }
.st-acc { margin-right: 3px; }
.st-a11y { font-size: 12.800px; }
.st-right {
  margin-left: auto;
  display: flex;
  align-items: center;
  height: 27px;
}
.st-focus { margin-left: 2px; width: 64px; }
.st-read { margin-right: 17px; }
.st-layout {
  width: 50px;
  height: 27px;
  background: #4a4a4a;
  display: flex;
  align-items: center;
  justify-content: center;
}
.st-web { margin: 0 23px 0 16px; }
.zoom-minus { width: 9px; height: 1px; background: #eee; }
.zoom-track {
  width: 126px;
  height: 1px;
  margin-left: 7px;
  background: #bbb;
  display: flex;
  align-items: center;
  padding-left: 60px;
}
.zoom-thumb { width: 6px; height: 14px; background: #bbb; }
.st-zoom { margin-left: 32px; margin-right: 13px; width: 28px; }

/* taskbar */
.taskbar {
  height: 60px;
  flex: none;
  display: flex;
  align-items: center;
  color: #1c1c1c;
  background: linear-gradient(90deg, #e7dde5 0%, #ead9de 35%, #e4d8e3 55%, #dcdae6 75%, #dddbe6 100%);
  border-top: 1px solid #c9c5c9;
}
.weather { width: 467px; display: flex; align-items: center; position: relative; padding-left: 25px; flex: none; }
.cloud { margin-top: 6px; }
.badge-one {
  position: absolute;
  left: 40px;
  top: -1px;
  width: 19px;
  height: 19px;
  border-radius: 50%;
  background: #c4261d;
  color: #fff;
  font-size: 13px;
  line-height: 19px;
  text-align: center;
}
.weather-text { margin-left: 10px; display: flex; flex-direction: column; line-height: 20px; font-size: 14px; }
.w-sub { color: #555; }
.task-search {
  margin-left: 18px;
  width: 123px;
  height: 38px;
  border-radius: 19px;
  background: #f5eff1;
  display: flex;
  align-items: center;
  padding-left: 28px;
  gap: 7px;
  font-size: 14px;
  flex: none;
}
.apps { margin-left: 18px; display: flex; gap: 25px; align-items: center; flex: none; }
.app { width: 30px; height: 30px; display: block; position: relative; }
.app-run::after {
  content: "";
  position: absolute;
  left: 11px;
  top: 36px;
  width: 8px;
  height: 4px;
  border-radius: 2px;
  background: #777;
}
.app-word::before {
  content: "";
  position: absolute;
  left: -9px;
  top: -9px;
  width: 48px;
  height: 48px;
  border-radius: 5px;
  background: #efeaf0;
}
.app-word svg { position: relative; }
.app-word::after {
  content: "";
  position: absolute;
  left: 5px;
  top: 35px;
  width: 20px;
  height: 4px;
  border-radius: 2px;
  background: #0f7fd6;
}
.b-tile {
  display: block;
  width: 30px;
  height: 30px;
  border-radius: 4px;
  background: #1c4a85;
  color: #fff;
  font-size: 21px;
  font-weight: 700;
  line-height: 30px;
  padding-left: 7px;
}
.b-tile i { color: #2bb0ef; font-style: normal; }
.tray { display: flex; align-items: center; margin-left: 58px; flex: none; }
.t10 { margin-left: 10px; }
.t-caret + .t10 { margin-left: 12px; }
.t-lang {
  margin-left: 18px;
  width: 30px;
  display: flex;
  flex-direction: column;
  align-items: center;
  line-height: 20px;
  font-size: 14px;
}
.t-wifi { margin-left: 22px; }
.t-clock {
  margin-left: 15px;
  width: 80px;
  display: flex;
  flex-direction: column;
  align-items: flex-end;
  line-height: 20px;
  font-size: 14.400px;
  white-space: nowrap;
}
.t-bell { margin-left: 13px; }

/* floating badge */
.bubble {
  position: absolute;
  left: 1841px;
  top: 993px;
  width: 50px;
  height: 50px;
  border-radius: 50%;
  background: #161b3a;
  display: flex;
  align-items: center;
  justify-content: center;
}
.bubble-ring {
  width: 36px;
  height: 36px;
  border-radius: 50%;
  background: linear-gradient(180deg, #8d8fd8, #e8415f);
  display: flex;
  align-items: center;
  justify-content: center;
}
.bubble-core {
  width: 30px;
  height: 30px;
  border-radius: 50%;
  background: #f4f4f8;
  color: #161b3a;
  font-weight: 700;
  font-size: 16px;
  line-height: 30px;
  text-align: center;
}
.bubble-dots {
  position: absolute;
  left: 0;
  bottom: 2px;
  width: 7px;
  height: 7px;
  background: repeating-linear-gradient(90deg, #888 0 1px, transparent 1px 3px);
}
```
